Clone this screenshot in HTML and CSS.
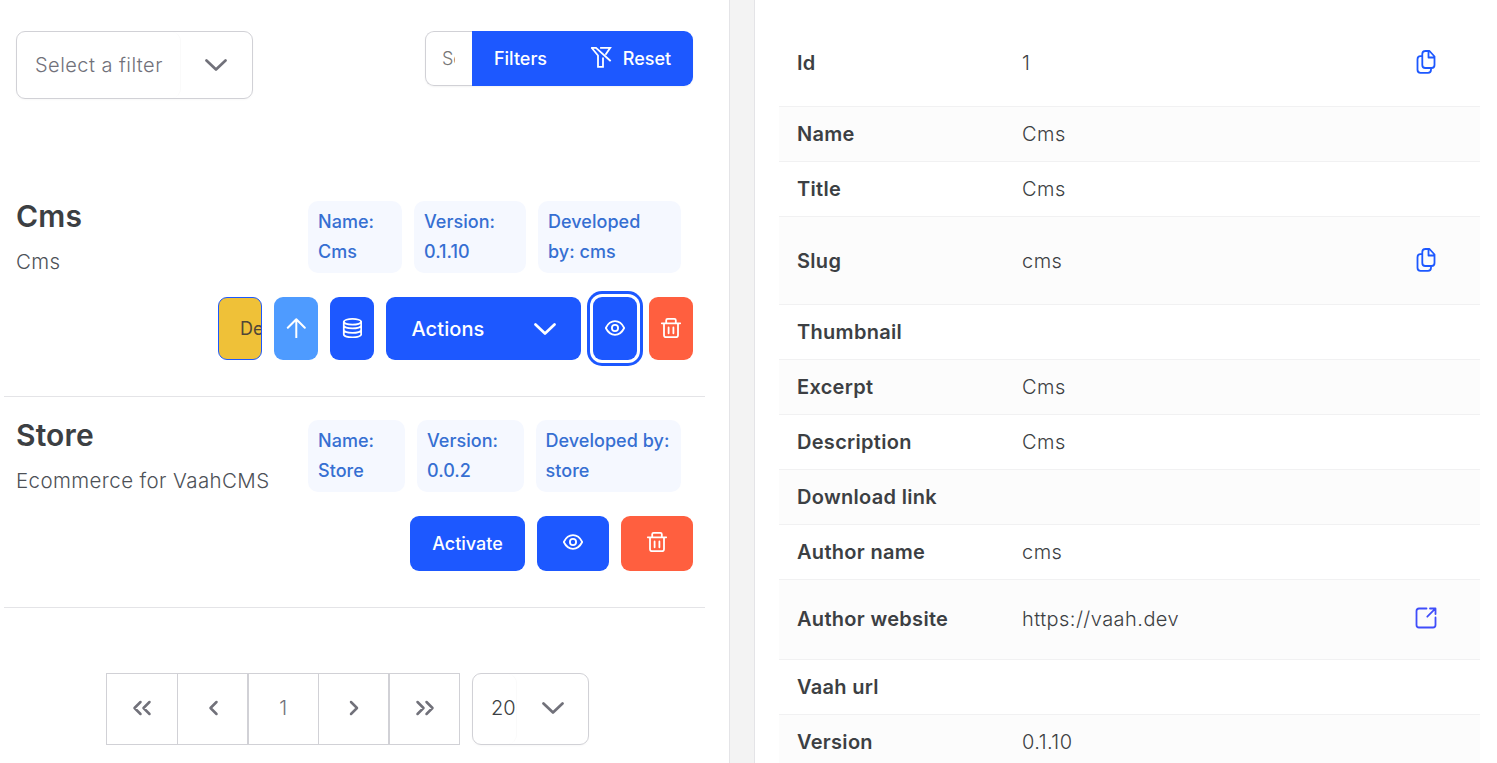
FILE: index.html
```html
<!DOCTYPE html>
<html lang="en">
<head>
<meta charset="utf-8">
<title>Modules</title>
<link rel="stylesheet" href="styles.css">
</head>
<body>
<svg class="defs" width="0" height="0">
  <symbol id="i-down" viewBox="0 0 22 22"><path d="M1.500 6.500 11 15.500l9.500-9" stroke-width="2.700"/></symbol>
  <symbol id="i-eye" viewBox="0 0 20 20"><path d="M.8 10C3 5.600 6.200 3.200 10 3.200s7 2.400 9.200 6.800c-2.200 4.400-5.400 6.800-9.200 6.800S3 14.400.8 10Z"/><circle cx="10" cy="10" r="3.100"/></symbol>
  <symbol id="i-trash" viewBox="0 0 20 20"><path d="M.8 5.300h18.400M5.200 5V2.300c0-.9.500-1.400 1.400-1.400h6.800c.9 0 1.400.5 1.400 1.400V5M3 5.500v11.800c0 1.200.6 1.900 1.800 1.900h10.400c1.200 0 1.800-.7 1.800-1.900V5.500M7.600 9.500v5.800M12.400 9.500v5.800"/></symbol>
  <symbol id="i-copy" viewBox="0 0 20 24"><path d="M6.200 6.200H4.500Q1.500 6.200 1.500 9.200v10.600Q1.500 22.800 4.500 22.800h7.500q3 0 3-3v-1.800M9 1h4.500l5 5.500v8.500q0 3-3 3H9.300q-3 0-3-3V4q0-3 3-3ZM12.500 1.200V7.500h5.800"/></symbol>
</svg>
<main class="app">
  <section class="panel">
    <header class="toolbar">
      <div class="select select-filter"><span class="select-label muted">Select a filter</span><svg class="chev"><use href="#i-down"/></svg></div>
      <div class="search-group">
        <div class="search"><span class="search-text">Search</span></div>
        <button class="btn btn-filters">Filters</button><button class="btn btn-reset"><svg class="funnel" viewBox="0 0 22 22"><path d="M2 1.800h4L20 14.500M2 2.200 8 9.500v11.300h5v-8.500M11 1.800h9.200L16 8"/></svg>Reset</button>
      </div>
    </header>

    <article class="module">
      <div class="module-head">
        <div class="module-info"><h2>Cms</h2><p>Cms</p></div>
        <div class="tags">
          <div class="tag tag-a">Name:<br>Cms</div>
          <div class="tag tag-b">Version:<br>0.1.10</div>
          <div class="tag tag-c">Developed<br>by: cms</div>
        </div>
      </div>
      <div class="actions tall">
        <button class="btn slim warning"><span>Deactivate</span></button>
        <button class="btn slim info"><svg class="icon" viewBox="0 0 20 20"><path d="M10.300 19.500V1.200M1.800 9.800l8.500-8.600 8.500 8.600" stroke-width="2"/></svg></button>
        <button class="btn slim"><svg class="icon" viewBox="0 0 20 20"><ellipse cx="10.500" cy="3.800" rx="8.700" ry="2.900"/><path d="M1.800 3.800v12.600c0 1.700 3.900 2.900 8.700 2.900s8.700-1.200 8.700-2.900V3.800M1.800 7.500c0 1.700 3.900 2.900 8.700 2.900s8.700-1.200 8.700-2.900M1.800 12c0 1.700 3.900 2.900 8.700 2.900s8.700-1.200 8.700-2.900"/></svg></button>
        <button class="btn split"><span class="split-label">Actions</span><svg class="chev"><use href="#i-down"/></svg></button>
        <button class="btn slim focused"><svg class="icon"><use href="#i-eye"/></svg></button>
        <button class="btn slim danger"><svg class="icon"><use href="#i-trash"/></svg></button>
      </div>
    </article>

    <article class="module second">
      <div class="module-head">
        <div class="module-info"><h2>Store</h2><p>Ecommerce for VaahCMS</p></div>
        <div class="tags">
          <div class="tag tag-d">Name:<br>Store</div>
          <div class="tag tag-e">Version:<br>0.0.2</div>
          <div class="tag tag-f">Developed by:<br>store</div>
        </div>
      </div>
      <div class="actions">
        <button class="btn activate">Activate</button>
        <button class="btn wide"><svg class="icon"><use href="#i-eye"/></svg></button>
        <button class="btn wide danger"><svg class="icon"><use href="#i-trash"/></svg></button>
      </div>
    </article>

    <nav class="pager">
      <div class="pages">
        <span class="page"><svg class="arrows" viewBox="0 0 20 16"><path d="M8.500 2 2.500 8l6 6M17.500 2l-6 6 6 6"/></svg></span>
        <span class="page"><svg class="arrows" viewBox="0 0 20 16"><path d="M13.500 2 7.500 8l6 6"/></svg></span>
        <span class="page strong">1</span>
        <span class="page"><svg class="arrows" viewBox="0 0 20 16"><path d="M7 2l6 6-6 6"/></svg></span>
        <span class="page strong"><svg class="arrows" viewBox="0 0 20 16"><path d="M2.500 2l6 6-6 6M11.500 2l6 6-6 6"/></svg></span>
      </div>
      <div class="select select-rows"><span class="select-label">20</span><svg class="chev"><use href="#i-down"/></svg></div>
    </nav>
  </section>

  <div class="gutter"></div>

  <section class="details">
    <dl class="row r88"><dt>Id</dt><dd>1</dd><svg class="copy"><use href="#i-copy"/></svg></dl>
    <dl class="row"><dt>Name</dt><dd>Cms</dd></dl>
    <dl class="row"><dt>Title</dt><dd>Cms</dd></dl>
    <dl class="row r88"><dt>Slug</dt><dd>cms</dd><svg class="copy"><use href="#i-copy"/></svg></dl>
    <dl class="row"><dt>Thumbnail</dt><dd></dd></dl>
    <dl class="row"><dt>Excerpt</dt><dd>Cms</dd></dl>
    <dl class="row"><dt>Description</dt><dd>Cms</dd></dl>
    <dl class="row"><dt>Download link</dt><dd></dd></dl>
    <dl class="row"><dt>Author name</dt><dd>cms</dd></dl>
    <dl class="row r80"><dt>Author website</dt><dd>https://vaah.dev</dd><svg class="external" viewBox="0 0 22 22"><path d="M11.500 1.500H4Q1.500 1.500 1.500 4v14q0 2.500 2.500 2.500h14q2.500 0 2.500-2.500v-7.500M15 1.500h5.500V7M20.300 1.700l-8 8"/></svg></dl>
    <dl class="row"><dt>Vaah url</dt><dd></dd></dl>
    <dl class="row"><dt>Version</dt><dd>0.1.10</dd></dl>
  </section>
</main>
</body>
</html>
```
FILE: styles.css
```css
* { box-sizing: border-box; }
body {
  margin: 0;
  height: 763px;
  overflow: hidden;
  background: #fff;
  color: #3c3f43;
  font-family: Inter, "Liberation Sans", sans-serif;
  font-size: 20px;
  font-weight: 350;
  letter-spacing: .45px;
}
svg { fill: none; stroke: currentColor; stroke-width: 1.800; stroke-linecap: round; stroke-linejoin: round; flex: none; }
.defs { position: absolute; }
.app { display: flex; height: 763px; overflow: hidden; }

.panel { width: 729px; padding: 31px 24px 0 4px; }
.toolbar { display: flex; justify-content: space-between; align-items: flex-start; padding: 0 12px; height: 157px; }
.select { display: flex; align-items: center; border: 1px solid #d1d1d6; border-radius: 9px; box-shadow: 0 1px 2px rgba(18, 18, 23, .03); }
.select .chev { color: #71717a; }
.select-label { display: flex; align-items: center; height: 100%; border-right: 1px solid #fafafa; border-radius: 0 9px 9px 0; }
.muted { color: #71717a; }
.select-filter { width: 237px; height: 68px; }
.select-filter .select-label { width: 164px; padding-left: 18px; }
.select-filter .chev { margin-left: 24px; }
.chev { width: 22px; height: 22px; }

.search-group { display: flex; width: 268px; height: 55px; border-radius: 9px; box-shadow: 0 1px 2px rgba(18, 18, 23, .05); }
.search { width: 47px; border: 1px solid #d1d1d6; border-right: 0; border-radius: 9px 0 0 9px; padding: 0 16px; display: flex; align-items: center; }
.search-text { width: 13px; overflow: hidden; color: #777; font-size: 18px; letter-spacing: 0; }

.btn {
  display: flex; align-items: center; justify-content: center;
  border: 0; padding: 0; border-radius: 9px;
  background: #1d58ff; color: #fff;
  font: 500 18px Inter, "Liberation Sans", sans-serif;
}
.btn-filters { width: 97px; border-radius: 0; }
.btn-reset { width: 124px; border-radius: 0 9px 9px 0; gap: 11px; padding-right: 1px; }
.funnel { width: 22px; height: 22px; margin-top: -3px; stroke-linecap: square; stroke-linejoin: miter; }

.module { height: 209px; border-bottom: 1px solid #e4e4e7; padding: 13px 12px 0; }
.second { height: 211px; padding-top: 23px; }
.module-head { display: flex; height: 72px; }
.module-info { width: 292px; }
h2 { margin: -1px 0 0; font-size: 30px; line-height: 32px; font-weight: 600; letter-spacing: .15px; }
p { margin: 16px 0 0; line-height: 28px; color: #4d5157; font-size: 20.500px; letter-spacing: .4px; white-space: nowrap; }
.tags { display: flex; gap: 12px; }
.tag { padding: 6px 10px; border-radius: 10px; background: #f5f8ff; color: #366fd2; font-size: 18px; line-height: 30px; font-weight: 550; letter-spacing: .04px; white-space: nowrap; }
.tag-a { width: 94px; }
.tag-b { width: 112px; }
.tag-c { width: 143px; }
.tag-d { width: 97px; }
.tag-e { width: 107px; }
.tag-f { width: 145px; padding-left: 9.500px; }

.actions { display: flex; justify-content: flex-end; gap: 12px; margin-top: 24px; height: 55px; }
.tall { height: 63px; }
.icon { width: 20px; height: 20px; margin-bottom: 2px; }
.wide .icon { margin-bottom: 3px; }
.slim { width: 44px; }
.warning { justify-content: flex-start; overflow: hidden; padding-left: 21px; background: #efc138; border: 1px solid #1d58ff; color: #504637; font-weight: 400; }
.info { background: #4e9bff; }
.split { width: 195px; font-size: 20px; letter-spacing: .1px; }
.split-label { width: 148px; padding-left: 25.500px; text-align: left; }
.split .chev { margin-right: 25px; }
.focused { box-shadow: 0 0 0 3px #fff, 0 0 0 6px #1d58ff; }
.danger { background: #ff5f3f; }
.activate { width: 115px; }
.wide { width: 72px; }

.pager { display: flex; gap: 12px; margin: 65px 0 0 102px; height: 72px; }
.pages { display: grid; grid-template-columns: 70px 70px 71px 70px 71px; width: 354px; border: 1px solid #d1d1d6; }
.page { display: flex; align-items: center; justify-content: center; padding-bottom: 2px; color: #71717a; }
.page + .page { border-left: 1px solid #d1d1d6; }
.page + .strong { border-left-width: 2px; }
.arrows { width: 20px; height: 16px; stroke-width: 2.500; }
.select-rows { width: 117px; }
.select-rows .select-label { width: 44px; padding: 0 0 2px 18px; letter-spacing: 0; }
.select-rows .chev { margin: 0 0 2px 25px; }

.gutter { width: 26px; background: #f3f3f3; border: solid #e4e4e7; border-width: 0 1px; }

.details { width: 725px; padding: 19px 0 0 24px; }
.row { display: flex; align-items: center; width: 701px; height: 55px; margin: 0; padding: 0 42px 0 18px; border-bottom: 1px solid #f1f1f2; }
.row:nth-child(even) { background: #fcfcfc; }
.r88 { height: 88px; }
.r80 { height: 80px; padding-bottom: 2px; }
dt { width: 225px; font-weight: 640; letter-spacing: .3px; }
dd { flex: 1; margin: 0; }
.copy { width: 20px; height: 24px; margin: 0 2px 2px 0; color: #1d58ff; }
.external { width: 22px; height: 22px; margin: 0 1px 1px 0; color: #3f4dfa; }
```
